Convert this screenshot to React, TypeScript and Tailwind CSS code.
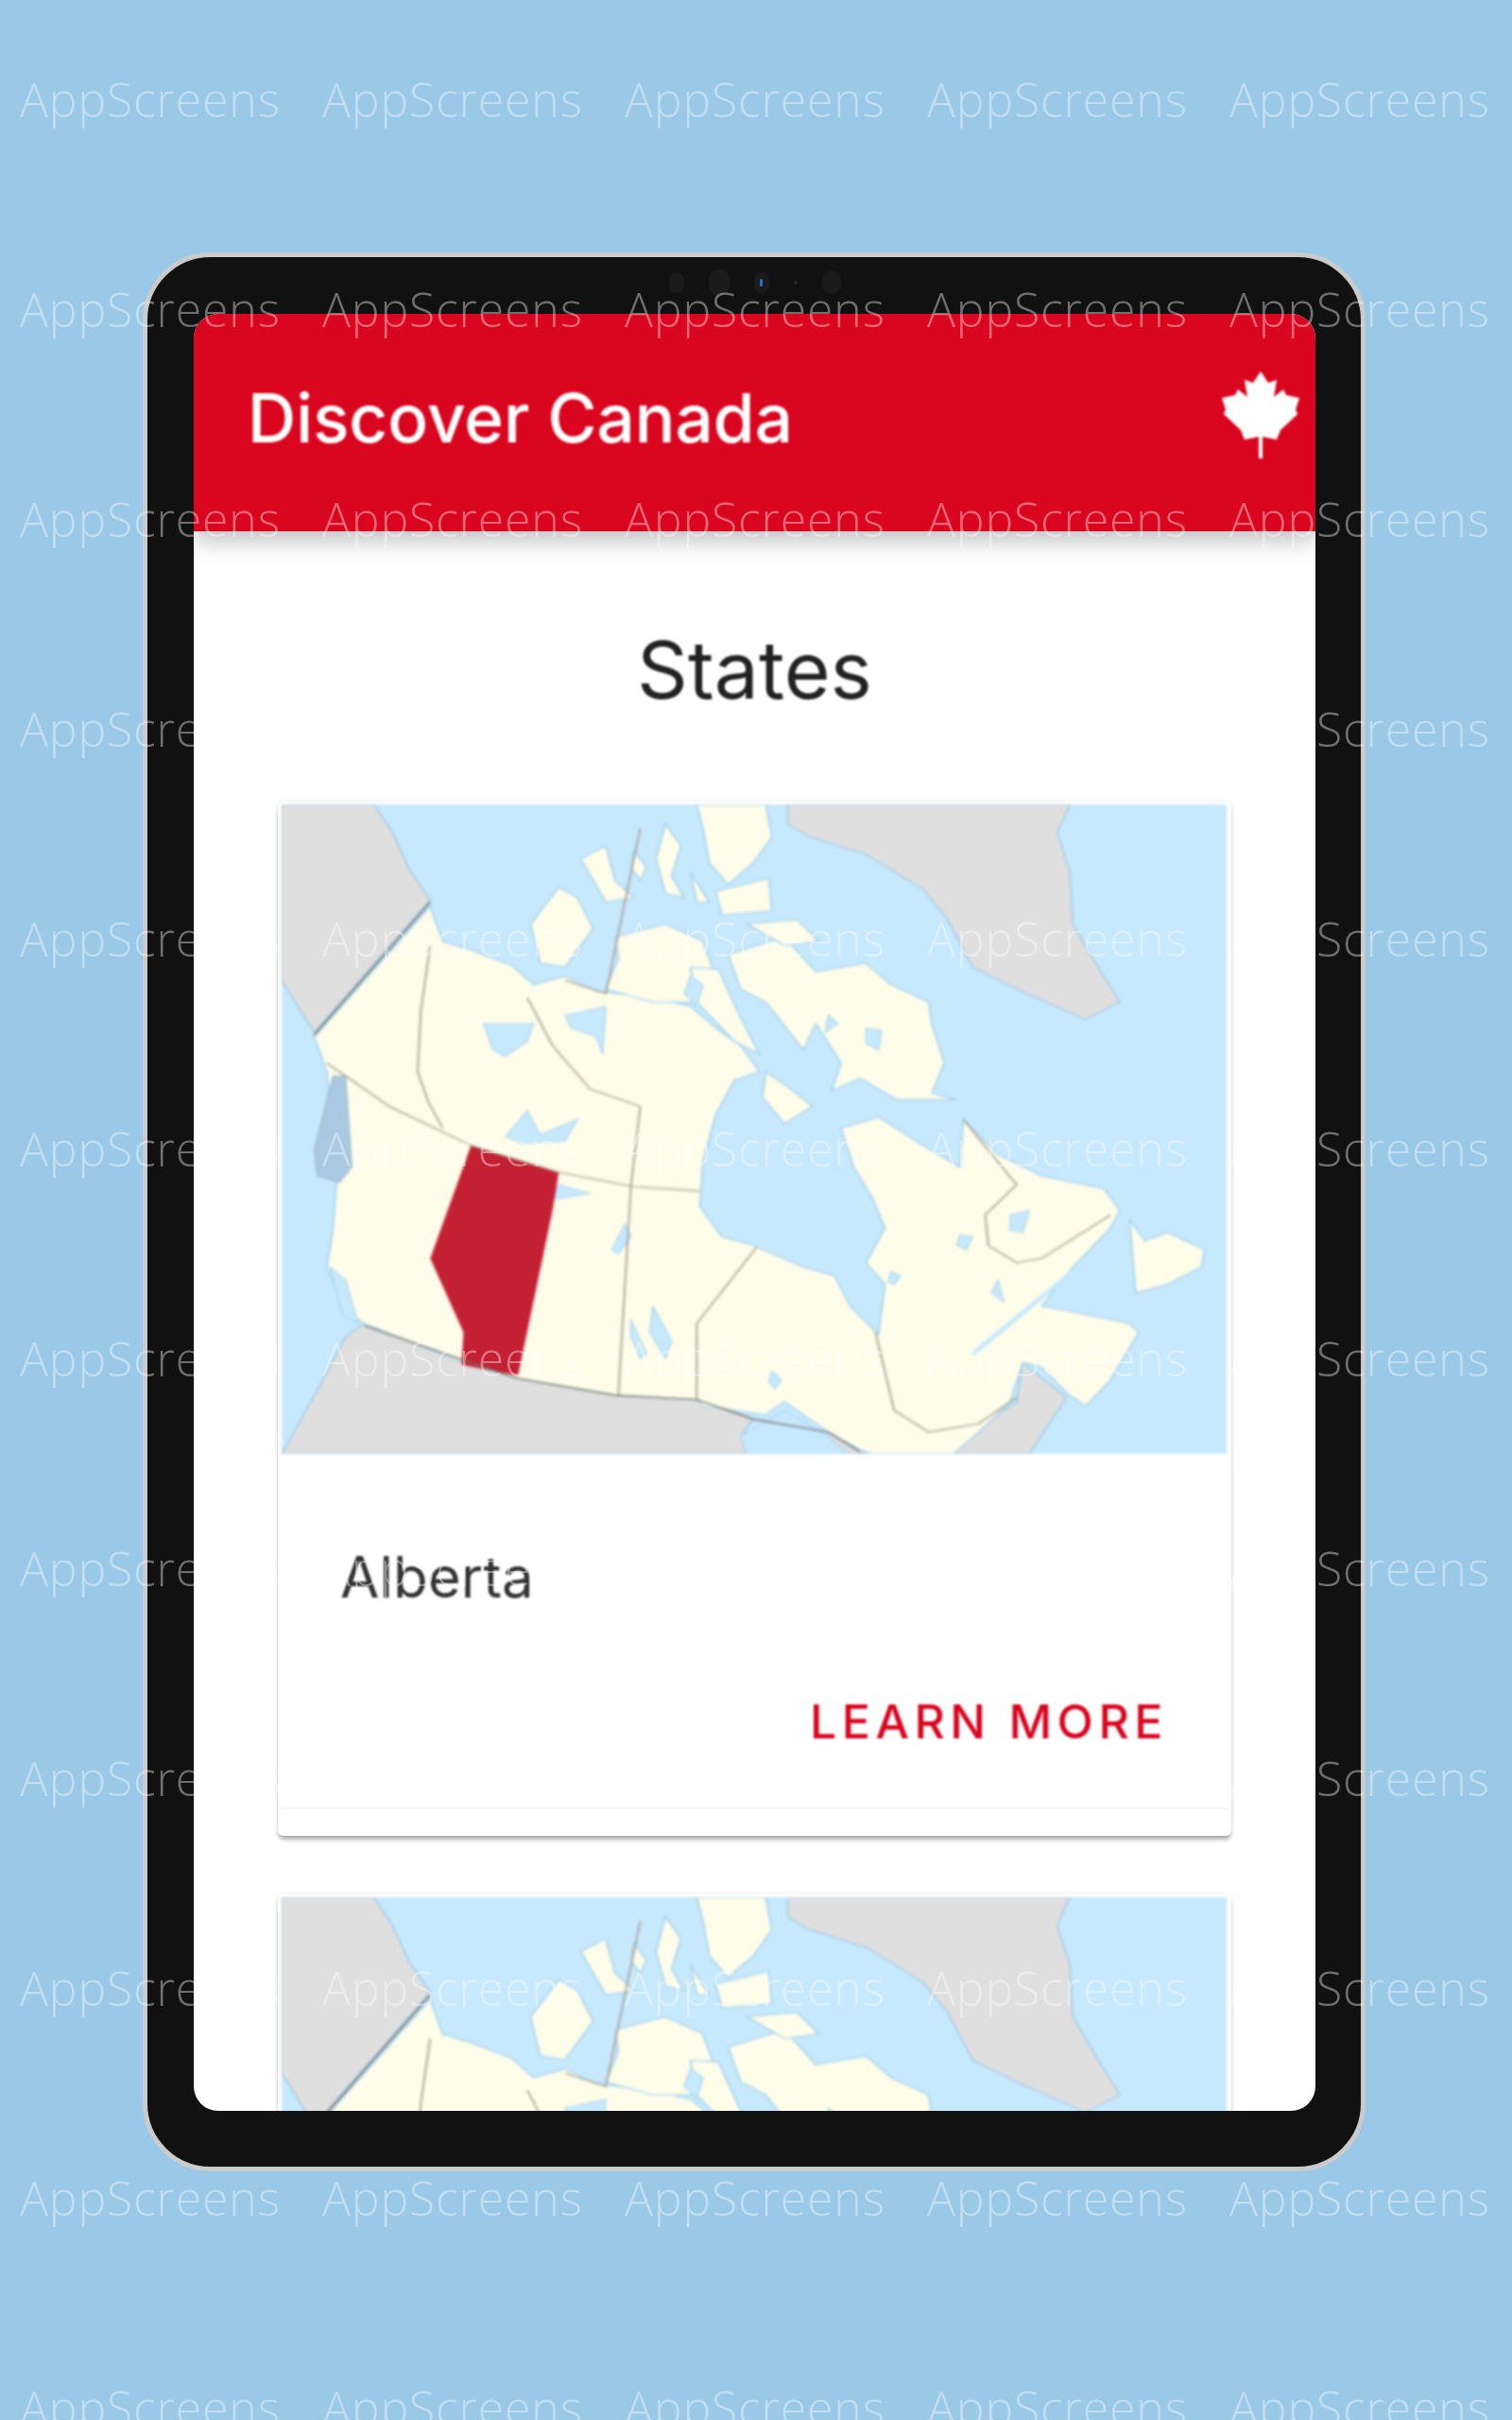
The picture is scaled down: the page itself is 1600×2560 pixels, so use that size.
const WATERMARK_ROWS = Array.from({ length: 12 });
const WATERMARK_COLS = Array.from({ length: 5 });

function MapleLeaf() {
  return (
    <svg viewBox="0 0 82 92" className="h-[92px] w-[82px] blur-[1px]" fill="#fff">
      <path d="M41 0 L49 12 L58 9 L55 27 L65 19 L68 25 L82 28 L78 40 L80 45 L62 62 L58 72 L43 69 L43 92 L39 92 L39 69 L24 72 L20 62 L2 45 L4 40 L0 28 L14 25 L17 19 L27 27 L24 9 L33 12 Z" />
    </svg>
  );
}

// coordinates traced on a 1568 square crop, so the viewBox stretches back to the real ratio
function CanadaMap() {
  return (
    <svg viewBox="28 25 1507 1495" preserveAspectRatio="none" className="block h-[687px] w-[1000px] shrink-0 blur-[1.5px]">
      <rect x="28" y="25" width="1507" height="1495" fill="#c7e9fd" />
      <g fill="#dfdfdf" stroke="#a9cde4" strokeWidth="3">
        <path d="M28 25 L175 25 L205 90 L230 170 L265 245 L80 550 L28 430 Z" />
        <path d="M835 25 L1285 25 L1265 90 L1285 180 L1290 300 L1330 400 L1365 480 L1310 520 L1200 450 L1130 400 L1090 290 L1050 220 L960 140 L870 100 L835 70 Z" />
        <path d="M28 1520 L90 1360 L130 1250 L160 1220 L300 1300 L400 1345 L560 1385 L690 1395 L780 1440 L760 1480 L800 1520 Z" />
        <path d="M900 1470 L960 1520 L900 1520 Z" />
        <path d="M1100 1520 L1130 1470 L1200 1400 L1210 1310 L1280 1390 L1220 1520 Z" />
      </g>
      <g fill="#fefde9" stroke="#a9d4ee" strokeWidth="3">
        <path d="M265 260 L285 340 L330 360 L395 395 L430 440 L480 420 L530 455 L560 460 L620 470 L680 490 L730 550 L760 580 L790 640 L750 660 L720 740 L700 850 L695 950 L730 1020 L780 1040 L860 1090 L910 1110 L935 1180 L980 1245 L990 1130 L960 1080 L990 1000 L970 930 L940 860 L920 770 L980 745 L1040 800 L1110 860 L1115 750 L1170 830 L1240 880 L1340 910 L1365 960 L1350 1000 L1290 1090 L1240 1180 L1280 1190 L1380 1220 L1395 1240 L1350 1350 L1310 1410 L1280 1380 L1240 1320 L1210 1310 L1190 1400 L1140 1470 L1100 1520 L970 1520 L950 1510 L900 1470 L830 1400 L800 1430 L700 1410 L690 1395 L560 1385 L400 1345 L300 1300 L160 1220 L130 1190 L100 1090 L110 1000 L115 900 L100 640 L80 560 Z" />
        <path d="M1380 980 L1390 1150 L1440 1130 L1495 1090 L1500 1050 L1440 1010 L1405 1030 Z" />
        <path d="M425 300 L470 215 L500 240 L525 310 L505 350 L480 400 L440 390 Z" />
        <path d="M560 330 L640 300 L700 340 L715 400 L690 480 L620 480 L545 450 L565 380 Z" />
        <path d="M680 400 L725 405 L755 500 L790 600 L750 570 L690 480 Z" />
        <path d="M740 370 L830 330 L880 410 L960 390 L1000 440 L1060 480 L1065 530 L1085 620 L1065 690 L1105 705 L1010 705 L950 655 L905 685 L920 620 L880 530 L860 590 L800 480 L760 450 Z" />
        <path d="M800 640 L840 680 L875 720 L830 760 L795 700 Z" />
        <path d="M505 150 L545 120 L560 200 L590 240 L545 250 Z" />
        <path d="M640 70 L665 120 L650 190 L670 240 L640 230 L625 150 Z" />
        <path d="M690 25 L800 25 L810 100 L780 160 L740 210 L710 160 L700 80 Z" />
        <path d="M720 225 L805 195 L810 270 L730 280 Z" />
        <path d="M680 180 L710 250 L690 250 Z" />
        <path d="M770 300 L850 290 L885 340 L830 350 Z" />
        <path d="M590 130 L610 170 L600 200 L585 170 Z" />
      </g>
      <g fill="#c7e9fd" stroke="#a9d4ee" strokeWidth="2">
        <path d="M350 530 L430 530 L420 570 L385 605 L365 590 Z" />
        <path d="M420 730 L440 785 L500 750 L480 800 L410 805 L385 790 Z" />
        <path d="M470 900 L520 920 L460 935 Z" />
        <path d="M480 510 L545 490 L540 600 L530 560 L490 540 Z" />
        <path d="M575 990 L585 1020 L565 1060 L555 1050 Z" />
        <path d="M620 1180 L650 1260 L640 1300 L615 1240 Z" />
        <path d="M585 1210 L610 1290 L600 1300 L585 1250 Z" />
        <path d="M1110 1015 L1130 1020 L1120 1050 L1105 1040 Z" />
        <path d="M1170 1120 L1180 1170 L1160 1150 Z" />
        <path d="M810 1330 L825 1350 L815 1370 L805 1355 Z" />
        <path d="M1190 970 L1220 960 L1210 1010 L1190 1005 Z" />
        <path d="M1000 1100 L1015 1110 L1005 1130 L995 1125 Z" />
        <path d="M760 1480 L830 1420 L900 1480 L930 1520 L770 1520 Z" />
        <path d="M105 1090 L130 1120 L150 1220 L125 1200 Z" />
        <path d="M960 540 L985 545 L980 590 L960 575 Z" />
        <path d="M900 510 L915 530 L895 550 Z" />
        <path d="M680 420 L700 440 L690 490 L670 460 Z" />
      </g>
      <path d="M1290 1100 L1130 1290" fill="none" stroke="#c7e9fd" strokeWidth="9" />
      <path d="M110 650 L130 650 L140 860 L120 895 L85 880 L80 820 Z" fill="#a9c9e2" stroke="#9db8cc" strokeWidth="2" />
      <path d="M330 810 L470 872 L460 960 L405 1340 L315 1315 L318 1240 L265 1070 Z" fill="#c32033" />
      <g fill="none" stroke="#a8a496" strokeWidth="3">
        <path d="M265 350 L250 500 L245 640 L262 710 L285 770" />
        <path d="M420 470 L460 580 L520 680 L600 720 L585 905 L565 1385" />
        <path d="M100 620 L200 720 L330 810 L470 872 L590 905 L695 915" />
        <path d="M785 1045 L690 1220 L690 1395" />
        <path d="M975 1240 L1005 1420 L1060 1470 L1140 1450 L1200 1390" />
        <path d="M1115 750 L1200 900 L1150 970 L1155 1040 L1200 1080 L1240 1070 L1350 970" />
        <path d="M600 80 L545 460 L480 430" />
      </g>
      <g fill="none" stroke="#77756c" strokeWidth="3">
        <path d="M265 250 L80 555" />
        <path d="M160 1225 L400 1345 L560 1385 L690 1395 L780 1440 L900 1470 L950 1515" />
      </g>
    </svg>
  );
}

function ProvinceCard() {
  return (
    <div className="rounded-[6px] bg-white px-[4px] pt-[3px] shadow-[0_0_6px_rgba(0,0,0,0.08),0_5px_4px_-1px_rgba(0,0,0,0.3)]">
      <CanadaMap />
      <div className="h-[376px] border-b-2 border-[#f3f3f3]">
        <div className="pl-[62px] pt-[90px] text-[60px] leading-[80px] text-[#333] blur-[1px]">Alberta</div>
        <div className="flex justify-end pr-[63px] pt-[83px]">
          <span className="text-[50px] font-medium leading-[60px] tracking-[5.5px] text-[#da0620] blur-[1px]">LEARN MORE</span>
        </div>
      </div>
      <div className="h-[28px]" />
    </div>
  );
}

export default function App() {
  return (
    <div className="relative h-[2560px] w-[1600px] overflow-hidden bg-[#9ac9e7] font-['Inter',sans-serif]">
      <div className="flex justify-center pt-[267px]">
        <div className="ml-[-4px] flex h-[2030px] w-[1294px] flex-col rounded-[72px] border-[5px] border-[#cbcbcb] bg-[#111] pb-[59px] pl-[49px] pr-[48px]">
          <div className="flex h-[60px] shrink-0 items-center justify-center">
            <div className="mt-[-6px] flex items-center gap-[26px]">
              <span className="h-[22px] w-[16px] rounded-full bg-[#1b1b1b]" />
              <span className="h-[28px] w-[22px] rounded-full bg-[#1b1b1b]" />
              <span className="flex h-[22px] w-[16px] items-center justify-center rounded-full bg-[#1b1b1b]">
                <span className="h-[8px] w-[3px] rounded-full bg-[#1e6fd0]" />
              </span>
              <span className="h-[4px] w-[4px] rounded-full bg-[#2a2a2a]" />
              <span className="h-[24px] w-[20px] rounded-full bg-[#1b1b1b]" />
            </div>
          </div>
          <div className="flex min-h-0 flex-1 flex-col overflow-hidden rounded-[26px] bg-white">
            <header className="z-10 flex h-[230px] shrink-0 items-center justify-between bg-[#da0620] pb-[16px] pl-[57px] pr-[17px] shadow-[0_10px_22px_rgba(0,0,0,0.25)]">
              <h1 className="pt-[6px] text-[71px] font-medium leading-none text-white blur-[1px]">Discover Canada</h1>
              <MapleLeaf />
            </header>
            <main className="flex flex-col">
              <h2 className="pt-[92px] text-center text-[84px] leading-[110px] text-[#222] blur-[1px]">States</h2>
              <div className="flex flex-col gap-[62px] px-[89px] pt-[84px]">
                <ProvinceCard />
                <ProvinceCard />
              </div>
            </main>
          </div>
        </div>
      </div>
      <div className="pointer-events-none absolute inset-x-0 top-[75px] z-20 flex flex-col gap-[162px]">
        {WATERMARK_ROWS.map((_, r) => (
          <div key={r} className="flex h-[60px] gap-[45px] pl-[21px]">
            {WATERMARK_COLS.map((_, c) => (
              <span key={c} className="w-[275px] shrink-0 whitespace-nowrap font-['Open_Sans',sans-serif] text-[50px] font-light leading-[60px] tracking-[0.8px] text-white/40">AppScreens</span>
            ))}
          </div>
        ))}
      </div>
    </div>
  );
}
